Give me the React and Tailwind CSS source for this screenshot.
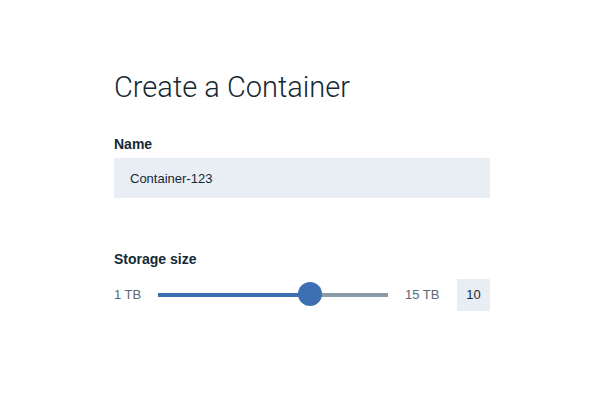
import React, { useState } from 'react';

const App = () => {
  const [name, setName] = useState('Container-123');
  const [size] = useState(10);
  // thumb sits at 152px of a 230px track in the design
  const fillPct = (152 / 230) * 100;

  return (
    <div className="w-[604px] h-[400px] bg-white font-['Liberation_Sans',Arial,sans-serif] text-[#152935]">
      <div className="pl-[114px] pt-[71px] w-[490px] flex flex-col">
        <h1 className="font-['Roboto',sans-serif] font-light text-[29px] leading-[32px] text-[#152935]">
          Create a Container
        </h1>

        <label className="mt-[31px] mb-[4px] text-[14px] leading-[20px] font-bold">Name</label>
        <input
          value={name}
          onChange={(e) => setName(e.target.value)}
          className="h-[40px] w-full bg-[#e9eef5] px-4 text-[13px] text-[#152935] outline-none"
        />

        <label className="mt-[51px] text-[14px] leading-[20px] font-bold">Storage size</label>
        <div className="mt-[10px] h-[32px] flex items-center">
          <span className="w-[44px] text-[13px] text-[#5a6872]">1 TB</span>
          <div className="relative w-[230px] h-[4px] bg-[#8c9ba5]">
            <div className="h-full bg-[#3d70b2]" style={{ width: `${fillPct}%` }} />
            <div
              className="absolute top-1/2 w-[24px] h-[24px] -ml-[12px] -mt-[13px] rounded-full bg-[#3d70b2]"
              style={{ left: `${fillPct}%` }}
            />
          </div>
          <span className="ml-[17px] text-[13px] text-[#5a6872]">15 TB</span>
          <div className="ml-auto w-[33px] h-[32px] bg-[#e9eef5] flex items-center justify-center text-[13px] text-[#152935]">
            {size}
          </div>
        </div>
      </div>
    </div>
  );
};

export default App;
